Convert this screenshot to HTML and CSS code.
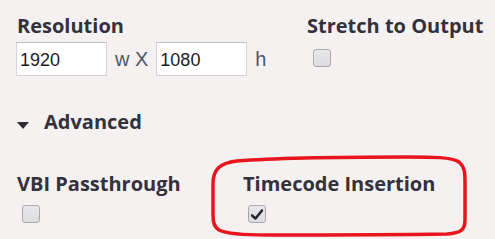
FILE: index.html
```html
<!DOCTYPE html>
<html lang="en">
<head>
    <meta charset="UTF-8">
    <title>Output Settings</title>
    <link rel="stylesheet" href="styles.css">
</head>
<body>
    <div class="panel">
        <div class="row top">
            <div class="field resolution">
                <label class="title">Resolution</label>
                <div class="res-inputs">
                    <input type="text" class="num" value="1920">
                    <span class="unit">w X</span>
                    <input type="text" class="num" value="1080">
                    <span class="unit">h</span>
                </div>
            </div>
            <div class="field stretch">
                <label class="title">Stretch to Output</label>
                <span class="check"></span>
            </div>
        </div>

        <div class="advanced">
            <span class="caret"></span>
            <span class="title">Advanced</span>
        </div>

        <div class="row bottom">
            <div class="field vbi">
                <label class="title">VBI Passthrough</label>
                <span class="check"></span>
            </div>
            <div class="field timecode">
                <label class="title">Timecode Insertion</label>
                <span class="check checked">
                    <svg width="12" height="11" viewBox="0 0 12 11">
                        <path d="M1 6.5 L4.5 9.5 L11 1.5" fill="none" stroke="#26262c" stroke-width="2.6" stroke-linecap="round" stroke-linejoin="round"/>
                    </svg>
                </span>
                <!-- red highlight drawn around the option -->
                <svg class="highlight" width="266" height="90" viewBox="0 0 266 90">
                    <path d="M30 9 C80 5 150 5 200 5 C225 5 245 5 252 10 C258 15 258 22 258 30 L258 68 C258 78 254 81 240 82 C180 83 110 83 60 83 C35 83 20 82 12 78 C6 74 6 68 6 60 L6 32 C6 18 12 11 30 9 Z"
                          fill="none" stroke="#e8141e" stroke-width="3.5"/>
                </svg>
            </div>
        </div>
    </div>
</body>
</html>
```

FILE: styles.css
```css
html, body {
    height: 100%;
}

body {
    margin: 0;
    background-color: #f5f1f1;
    font-family: "Open Sans", sans-serif;
    color: #33313b;
}

.panel {
    min-height: 100%;
    box-sizing: border-box;
    padding: 14px 0 0 17px;
}

.row {
    display: flex;
}

.title {
    display: block;
    font-weight: bold;
    font-size: 20px;
    line-height: 24px;
    color: #33313b;
}

.resolution {
    width: 290px;
}

.res-inputs {
    display: flex;
    align-items: center;
    margin-top: 4px;
    margin-left: -1px;
}

.num {
    width: 91px;
    height: 34px;
    box-sizing: border-box;
    border: 1px solid #d4d4d8;
    border-top-color: #bdbdc0;
    background: #fff;
    font-family: "Liberation Sans", Arial, sans-serif;
    font-size: 18px;
    color: #1c1c24;
    padding: 2px 3px 0;
    outline: none;
}

.unit {
    font-family: "Liberation Sans", Arial, sans-serif;
    font-size: 20px;
    color: #4e5868;
    margin: 0 8px;
}

.stretch .check {
    margin: 11px 0 0 6px;
}

.check {
    display: flex;
    align-items: center;
    justify-content: center;
    width: 18px;
    height: 18px;
    box-sizing: border-box;
    border: 1px solid #a9a9ae;
    border-radius: 3px;
    background: linear-gradient(#e8e8ea, #dcdcde);
}

.advanced {
    display: flex;
    align-items: center;
    margin-top: 34px;
}

.caret {
    width: 0;
    height: 0;
    border-left: 6px solid transparent;
    border-right: 6px solid transparent;
    border-top: 7px solid #2c2c34;
    margin: 6px 15px 0 0;
}

.bottom {
    margin-top: 38px;
}

.vbi {
    width: 226px;
}

.vbi .check,
.timecode .check {
    margin: 9px 0 0 5px;
}

.timecode {
    position: relative;
}

.highlight {
    position: absolute;
    left: -36px;
    top: -20px;
}
```
